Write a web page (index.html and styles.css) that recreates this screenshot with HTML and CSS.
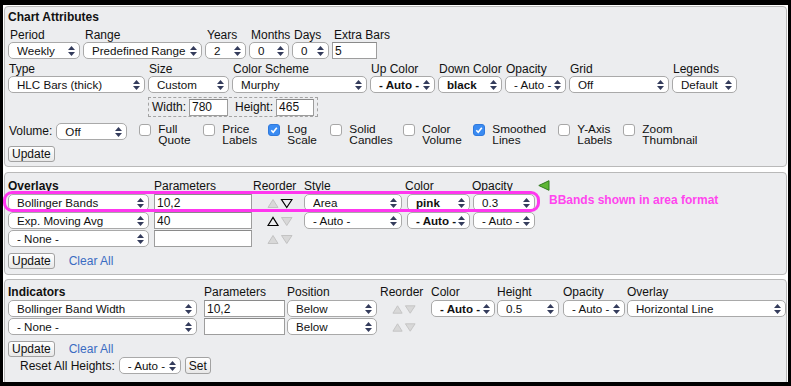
FILE: index.html
```html
<!DOCTYPE html>
<html lang="en">
<head>
    <meta charset="UTF-8">
    <meta name="viewport" content="width=device-width, initial-scale=1.0">
    <title>Chart Attributes</title>
    <link rel="stylesheet" href="styles.css">
</head>
<body>
<div id="page">
    <div class="panel" id="attributes">
        <div class="title">Chart Attributes</div>
        <div class="fields">
            <div class="field"><span class="lbl">Period</span><select class="w72"><option>Weekly</option><option>Daily</option></select></div>
            <div class="field"><span class="lbl">Range</span><select class="w119"><option>Predefined Range</option></select></div>
            <div class="field"><span class="lbl">Years</span><select class="w41"><option>2</option></select></div>
            <div class="field"><span class="lbl">Months</span><select class="w40"><option>0</option></select></div>
            <div class="field"><span class="lbl">Days</span><select class="w37"><option>0</option></select></div>
            <div class="field"><span class="lbl">Extra Bars</span><input class="w45" type="text" value="5"></div>
        </div>
        <div class="fields second">
            <div class="field"><span class="lbl">Type</span><select class="w137"><option>HLC Bars (thick)</option></select></div>
            <div class="field"><span class="lbl">Size</span><select class="w81"><option>Custom</option></select></div>
            <div class="field"><span class="lbl">Color Scheme</span><select class="w135"><option>Murphy</option></select></div>
            <div class="field"><span class="lbl">Up Color</span><select class="w65 b"><option>- Auto -</option></select></div>
            <div class="field"><span class="lbl">Down Color</span><select class="w64 b"><option>black</option></select></div>
            <div class="field"><span class="lbl">Opacity</span><select class="w61"><option>- Auto -</option></select></div>
            <div class="field"><span class="lbl">Grid</span><select class="w100"><option>Off</option></select></div>
            <div class="field"><span class="lbl">Legends</span><select class="w65"><option>Default</option></select></div>
        </div>
        <div class="size-box">
            <span>Width:</span><input class="w39" type="text" value="780">
            <span class="gap">Height:</span><input class="w38" type="text" value="465">
        </div>
        <div class="volume">
            <span class="vol-lbl">Volume:</span>
            <select class="w71"><option>Off</option></select>
            <div class="checks">
                <div class="check"><span class="box"></span><span class="cap">Full<br>Quote</span></div>
                <div class="check"><span class="box"></span><span class="cap">Price<br>Labels</span></div>
                <div class="check"><span class="box on"><svg width="10" height="10" viewBox="0 0 10 10"><path d="M2.3 5.3L4.2 7.2L7.8 2.8"/></svg></span><span class="cap">Log<br>Scale</span></div>
                <div class="check"><span class="box"></span><span class="cap">Solid<br>Candles</span></div>
                <div class="check"><span class="box"></span><span class="cap">Color<br>Volume</span></div>
                <div class="check"><span class="box on"><svg width="10" height="10" viewBox="0 0 10 10"><path d="M2.3 5.3L4.2 7.2L7.8 2.8"/></svg></span><span class="cap">Smoothed<br>Lines</span></div>
                <div class="check"><span class="box"></span><span class="cap">Y-Axis<br>Labels</span></div>
                <div class="check"><span class="box"></span><span class="cap">Zoom<br>Thumbnail</span></div>
            </div>
        </div>
        <button>Update</button>
    </div>

    <div class="panel" id="overlays">
        <div class="ring"></div>
        <div class="ov-grid">
            <b class="head">Overlays</b>
            <span class="head">Parameters</span>
            <span class="head">Reorder</span>
            <span class="head">Style</span>
            <span class="head">Color</span>
            <span class="head">Opacity</span>
            <span class="head"><svg class="flag" width="12" height="11" viewBox="0 0 12 11"><path d="M11 0.7V10.3L0.8 5.5Z"/></svg></span>

            <select class="w141"><option>Bollinger Bands</option></select>
            <input class="w98" type="text" value="10,2">
            <svg class="reorder" width="26" height="11" viewBox="0 0 26 11"><path class="off" d="M1 9.5L6 1.5L11 9.5Z"/><path class="on" d="M14.5 1.5H25L19.75 9.5Z"/></svg>
            <select class="w98"><option>Area</option></select>
            <select class="w63 b sh2"><option>pink</option></select>
            <select class="w62 sh1"><option>0.3</option></select>
            <span class="note">BBands shown in area format</span>

            <select class="w141"><option>Exp. Moving Avg</option></select>
            <input class="w98" type="text" value="40">
            <svg class="reorder" width="26" height="11" viewBox="0 0 26 11"><path class="on" d="M1 9.5L6 1.5L11 9.5Z"/><path class="off" d="M14.5 1.5H25L19.75 9.5Z"/></svg>
            <select class="w98"><option>- Auto -</option></select>
            <select class="w63 b sh2"><option>- Auto -</option></select>
            <select class="w62 sh1"><option>- Auto -</option></select>
            <span></span>

            <select class="w141"><option>- None -</option></select>
            <input class="w98" type="text" value="">
            <svg class="reorder" width="26" height="11" viewBox="0 0 26 11"><path class="off" d="M1 9.5L6 1.5L11 9.5Z"/><path class="off" d="M14.5 1.5H25L19.75 9.5Z"/></svg>
        </div>
        <div class="actions"><button>Update</button><a href="#">Clear All</a></div>
    </div>

    <div class="panel" id="indicators">
        <div class="in-grid">
            <b class="head">Indicators</b>
            <span class="head">Parameters</span>
            <span class="head">Position</span>
            <span class="head">Reorder</span>
            <span class="head sh1">Color</span>
            <span class="head">Height</span>
            <span class="head">Opacity</span>
            <span class="head">Overlay</span>

            <select class="w189"><option>Bollinger Band Width</option></select>
            <input class="w81" type="text" value="10,2">
            <select class="w90"><option>Below</option></select>
            <svg class="reorder small" width="24" height="11" viewBox="0 0 26 11"><path class="off" d="M1 9.5L6 1.5L11 9.5Z"/><path class="off" d="M14.5 1.5H25L19.75 9.5Z"/></svg>
            <select class="w64 b sh1"><option>- Auto -</option></select>
            <select class="w62"><option>0.5</option></select>
            <select class="w62"><option>- Auto -</option></select>
            <select class="w159"><option>Horizontal Line</option></select>

            <select class="w189"><option>- None -</option></select>
            <input class="w81" type="text" value="">
            <select class="w90"><option>Below</option></select>
            <svg class="reorder small" width="24" height="11" viewBox="0 0 26 11"><path class="off" d="M1 9.5L6 1.5L11 9.5Z"/><path class="off" d="M14.5 1.5H25L19.75 9.5Z"/></svg>
        </div>
        <div class="actions"><button>Update</button><a href="#">Clear All</a></div>
        <div class="reset">
            <span>Reset All Heights:</span>
            <select class="w62"><option>- Auto -</option></select>
            <button>Set</button>
        </div>
    </div>
</div>
</body>
</html>
```

FILE: styles.css
```css
body {
    margin: 0;
    height: 386px;
    overflow: hidden;
    background: #000;
    font-family: "Liberation Sans", Arial, sans-serif;
    font-size: 12px;
    color: #111;
}
#page {
    margin: 5px 3px 0 3px;
    height: 377px;
    padding-top: 1px;
    box-sizing: border-box;
    background: #fff;
    overflow: hidden;
}
.panel {
    margin: 0 1px;
    border: 1px solid #b9b9b9;
    border-radius: 4px;
    background: #ecedef;
    padding: 3px 0 4px 3px;
    position: relative;
}
.title {
    font-weight: bold;
    line-height: 14px;
}

/* form controls */
select {
    -webkit-appearance: none;
    appearance: none;
    height: 17px;
    margin: 0;
    padding: 0 11px 0 8px;
    box-sizing: border-box;
    border: 1px solid #a9a9a9;
    border-radius: 5px;
    background: #fff url("data:image/svg+xml,%3Csvg xmlns='http://www.w3.org/2000/svg' width='7' height='10'%3E%3Cpath d='M3.5 0L7 4H0zM0 6h7l-3.5 4z' fill='%23343c5c'/%3E%3C/svg%3E") no-repeat right 4px center;
    font-family: "Liberation Sans", Arial, sans-serif;
    font-size: 11.6px;
    color: #111;
    outline: none;
}
select.b {
    font-weight: bold;
}
input {
    height: 17px;
    margin: 0;
    padding: 0 2px;
    box-sizing: border-box;
    border: 1px solid #9d9d9d;
    border-top-color: #8a8a8a;
    background: #fff;
    font-family: "Liberation Sans", Arial, sans-serif;
    font-size: 12px;
    color: #111;
}
button {
    height: 16px;
    margin: 0;
    padding: 0 3px;
    border: 1px solid #a2a2a2;
    border-radius: 3px;
    background: linear-gradient(#ffffff, #e8e8e8);
    font-family: "Liberation Sans", Arial, sans-serif;
    font-size: 12px;
    line-height: 14px;
    color: #111;
}
.w37 { width: 37px; }
.w38 { width: 38px; }
.w39 { width: 39px; }
.w40 { width: 40px; }
.w41 { width: 41px; }
.w45 { width: 45px; }
.w61 { width: 61px; }
.w62 { width: 62px; }
.w63 { width: 63px; }
.w64 { width: 64px; }
.w65 { width: 65px; }
.w71 { width: 71px; }
.w72 { width: 72px; }
.w81 { width: 81px; }
.w90 { width: 90px; }
.w98 { width: 98px; }
.w100 { width: 100px; }
.w119 { width: 119px; }
.w135 { width: 135px; }
.w137 { width: 137px; }
.w141 { width: 141px; }
.w159 { width: 159px; }
.w189 { width: 189px; }
.sh1 { margin-left: 1px; }
.sh2 { margin-left: 2px; }

/* chart attributes */
.fields {
    display: flex;
    gap: 3px;
    margin-top: 4px;
}
.fields.second {
    margin-top: 3px;
}
.field {
    display: flex;
    flex-direction: column;
}
.lbl {
    width: 0;
    height: 14px;
    line-height: 14px;
    padding-left: 2px;
    white-space: nowrap;
}
.second .lbl {
    padding-left: 1px;
}
.size-box {
    display: inline-flex;
    align-items: center;
    height: 20px;
    margin: 4px 0 0 140px;
    padding: 0 3px 0 3px;
    box-sizing: border-box;
    border: 1px dashed #a3a3a3;
}
.size-box input {
    margin-left: 3px;
}
.size-box .gap {
    margin-left: 7px;
}
.volume {
    display: flex;
    height: 24px;
    margin-top: 5px;
}
.vol-lbl {
    margin-top: 1px;
    padding-left: 1px;
    line-height: 17px;
}
.volume select {
    margin: 1px 0 0 4px;
}
.checks {
    display: grid;
    grid-template-columns: 64px 65px 62px 73px 70px 85px 65px auto;
    margin-left: 12px;
}
.check {
    display: flex;
}
.box {
    flex: none;
    width: 12px;
    height: 12px;
    margin-top: 2px;
    box-sizing: border-box;
    border: 1px solid #a7a7a7;
    border-radius: 3px;
    background: #fff;
}
.box.on {
    border-color: #2f79dc;
    background: #3a8bf2;
}
.box svg {
    display: block;
    margin: 0;
}
.box svg path {
    fill: none;
    stroke: #fff;
    stroke-width: 1.6;
}
.cap {
    margin: 2px 0 0 7px;
    font-size: 11.8px;
    line-height: 11px;
    white-space: nowrap;
}

/* overlays + indicators */
#overlays {
    margin-top: 5px;
    padding-top: 6px;
    padding-bottom: 5px;
}
#indicators {
    margin-top: 4px;
    padding-top: 5px;
    padding-bottom: 10px;
}
.ov-grid,
.in-grid {
    display: grid;
    row-gap: 1px;
    align-items: start;
}
.ov-grid {
    grid-template-columns: 146px 99px 51px 101px 67px 66px auto;
}
.in-grid {
    grid-template-columns: 196px 83px 93px 50px 67px 66px 64px auto;
}
.head {
    line-height: 14px;
    white-space: nowrap;
}
.reorder {
    display: block;
    margin: 4px 0 0 14px;
}
.reorder.small {
    margin-left: 12px;
}
.reorder .off {
    fill: #d8d8d8;
    stroke: #c3c3c3;
    stroke-width: 1;
}
.reorder .on {
    fill: none;
    stroke: #000;
    stroke-width: 1.2;
}
.flag {
    display: block;
    margin-top: 1px;
}
.flag path {
    fill: #5db634;
    stroke: #2f7a1d;
    stroke-width: 1;
}
.note {
    margin-left: 11px;
    line-height: 12px;
    font-weight: bold;
    color: #ff45ee;
    white-space: nowrap;
}
.ring {
    position: absolute;
    top: 18px;
    left: -2px;
    width: 537px;
    height: 21px;
    box-sizing: border-box;
    border: 3px solid #ff36ef;
    border-radius: 9px;
    pointer-events: none;
    z-index: 2;
}
.actions {
    display: flex;
    align-items: center;
    margin-top: 6px;
}
.actions a {
    margin-left: 14px;
    color: #3a6cc2;
    text-decoration: none;
}
.reset {
    display: flex;
    align-items: center;
    height: 17px;
    padding-left: 12px;
}
.reset select {
    margin-left: 4px;
}
.reset button {
    margin-left: 4px;
    height: 17px;
}
```
